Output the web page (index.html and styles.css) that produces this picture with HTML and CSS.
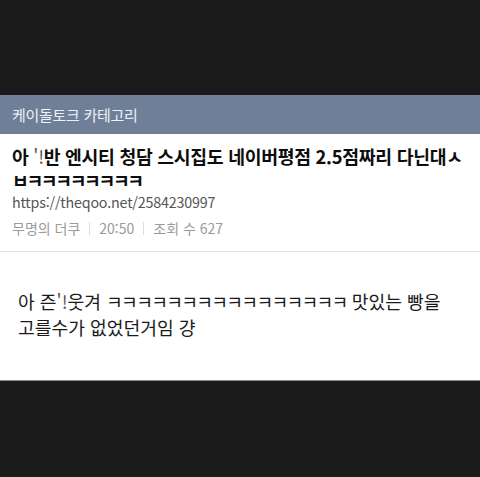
FILE: index.html
```html
<!DOCTYPE html>
<html lang="ko">
<head>
<meta charset="utf-8">
<link rel="stylesheet" href="styles.css">
</head>
<body>
<div class="screen">
  <div class="band-top"></div>
  <div class="category">케이돌토크 카테고리</div>
  <div class="post">
    <div class="post-head">
      <h1 class="title">아 <span class="cut">'!</span>반 엔시티 청담 스시집도 네이버평점 2.5점짜리 다닌대<span class="jamo">ㅅ</span><br><span class="jamo">ㅂㅋㅋㅋㅋㅋㅋㅋㅋ</span></h1>
      <div class="url">https://theqoo.net/2584230997</div>
      <div class="meta"><span>무명의 더쿠</span><span class="sep"></span><span>20:50</span><span class="sep"></span><span>조회 수 627</span></div>
    </div>
    <div class="post-body">
      <p>아 즌<span class="cut">'!</span>웃겨 <span class="jamo">ㅋㅋㅋㅋㅋㅋㅋㅋㅋㅋㅋㅋㅋㅋㅋㅋ</span> 맛있는 빵을<br>고를수가 없었던거임 걍</p>
    </div>
  </div>
  <div class="band-bottom"></div>
</div>
</body>
</html>
```

FILE: styles.css
```css
html, body {
  margin: 0;
  padding: 0;
  background: #1b1b1c;
}
.screen {
  width: 480px;
  height: 477px;
  display: flex;
  flex-direction: column;
  font-family: "Noto Sans CJK KR", "Noto Sans", sans-serif;
}
.band-top {
  height: 95px;
  background: #1b1b1c;
}
.category {
  height: 39px;
  background: #6f7f98;
  color: #eef1f5;
  font-size: 15px;
  line-height: 39px;
  padding-left: 12px;
  letter-spacing: -0.3px;
}
.post {
  background: #fff;
  border-bottom: 1px solid #8a8a8a;
}
.post-head {
  padding: 11px 12px 0;
  border-bottom: 1px solid #e3e3e3;
  height: 118px;
  box-sizing: border-box;
}
.title {
  margin: 0;
  font-size: 18.3px;
  font-weight: 700;
  line-height: 23.5px;
  color: #0d0d0d;
  letter-spacing: -0.3px;
  white-space: nowrap;
}
.title .jamo {
  letter-spacing: -2.4px;
}
.cut {
  font-weight: 400;
  color: #555;
}
.url {
  margin-top: 0;
  font-size: 14.3px;
  line-height: 20px;
  color: #555;
  letter-spacing: -0.2px;
}
.meta {
  margin-top: 6px;
  font-size: 14px;
  line-height: 20px;
  color: #9a9a9a;
  display: flex;
  align-items: center;
}
.sep {
  width: 1px;
  height: 13px;
  background: #ddd;
  margin: 0 9px;
}
.post-body {
  height: 128px;
  padding: 36px 18px 0;
  box-sizing: border-box;
}
.post-body p {
  margin: 0;
  font-size: 18.2px;
  line-height: 26px;
  color: #1a1a1a;
  white-space: nowrap;
}
.post-body .jamo {
  letter-spacing: -1.7px;
}
.band-bottom {
  flex: 1;
  background: #1b1b1c;
}
```
